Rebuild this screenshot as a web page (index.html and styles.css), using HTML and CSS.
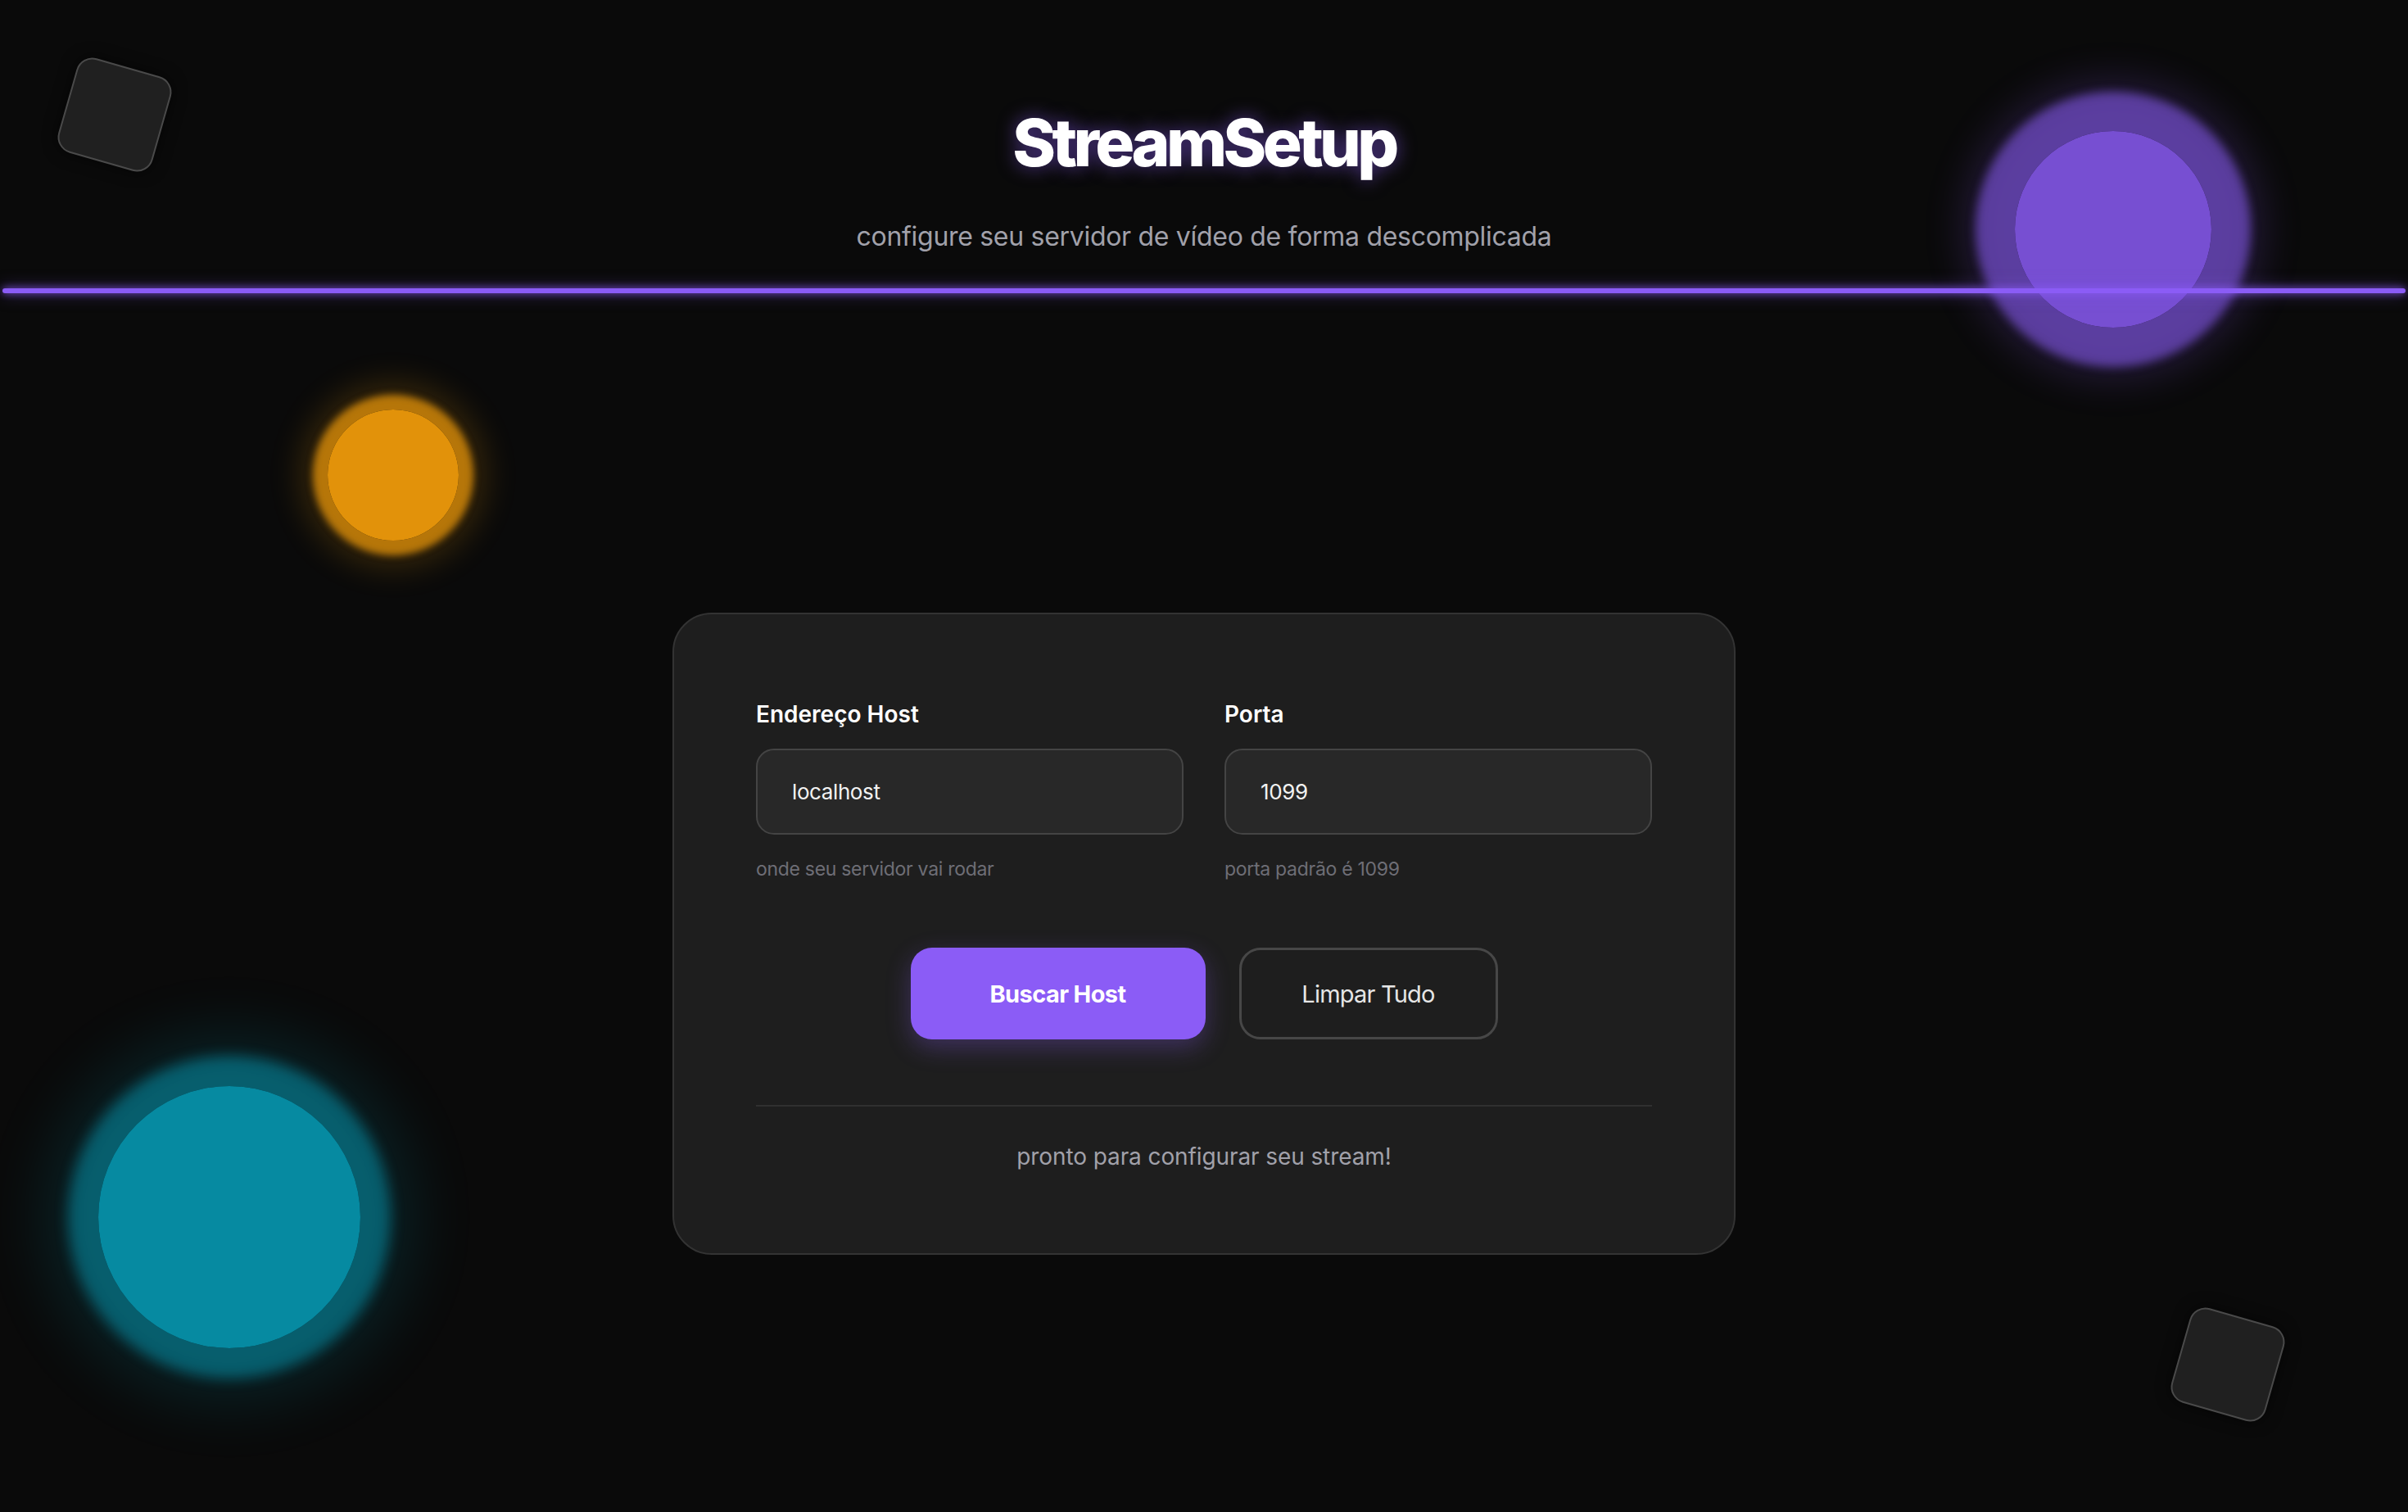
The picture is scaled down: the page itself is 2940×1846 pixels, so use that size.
FILE: index.html
```html
<!DOCTYPE html>
<html lang="pt-BR">
<head>
<meta charset="utf-8">
<title>StreamSetup</title>
<link rel="stylesheet" href="styles.css">
</head>
<body>
<div class="decor">
  <div class="square square-tl"></div>
  <div class="square square-br"></div>
  <div class="orb orb-purple"></div>
  <div class="orb orb-orange"></div>
  <div class="orb orb-teal"></div>
</div>

<header class="header">
  <h1 class="title">StreamSetup</h1>
  <p class="subtitle">configure seu servidor de vídeo de forma descomplicada</p>
</header>
<div class="glow-line"></div>

<main class="main">
  <section class="card">
    <div class="fields">
      <div class="field">
        <label class="label" for="host">Endereço Host</label>
        <input class="input" id="host" type="text" value="localhost">
        <span class="hint">onde seu servidor vai rodar</span>
      </div>
      <div class="field">
        <label class="label" for="port">Porta</label>
        <input class="input" id="port" type="text" value="1099">
        <span class="hint">porta padrão é 1099</span>
      </div>
    </div>
    <div class="actions">
      <button class="btn btn-primary" type="button">Buscar Host</button>
      <button class="btn btn-ghost" type="button">Limpar Tudo</button>
    </div>
    <div class="divider"></div>
    <p class="status">pronto para configurar seu stream!</p>
  </section>
</main>
</body>
</html>
```
FILE: styles.css
```css
* { box-sizing: border-box; }

html, body {
  margin: 0;
  padding: 0;
}

body {
  width: 2940px;
  height: 1846px;
  background: #0a0a0a;
  font-family: Inter, "Noto Sans", "Liberation Sans", sans-serif;
  color: #fff;
  position: relative;
  overflow: hidden;
}

/* decorative canvas */
.decor {
  position: absolute;
  inset: 0;
  pointer-events: none;
}

.square {
  position: absolute;
  width: 120px;
  height: 120px;
  border-radius: 20px;
  background: #202020;
  border: 2px solid #4a4a4a;
  transform: rotate(16deg);
  box-shadow: 0 0 18px rgba(0, 0, 0, 0.6);
}
.square-tl { left: 80px; top: 80px; }
.square-br { left: 2660px; top: 1606px; }

.orb {
  position: absolute;
  border-radius: 50%;
}
.orb-purple {
  left: 2460px;
  top: 160px;
  width: 240px;
  height: 240px;
  background: rgba(139, 92, 246, 0.85);
  box-shadow: 0 0 12px 48px rgba(139, 92, 246, 0.55),
              0 0 50px 62px rgba(139, 92, 246, 0.2);
}
.orb-orange {
  left: 400px;
  top: 500px;
  width: 160px;
  height: 160px;
  background: rgba(245, 158, 11, 0.92);
  box-shadow: 0 0 8px 18px rgba(245, 158, 11, 0.68),
              0 0 40px 32px rgba(245, 158, 11, 0.2);
}
.orb-teal {
  left: 120px;
  top: 1326px;
  width: 320px;
  height: 320px;
  background: rgba(6, 182, 212, 0.75);
  box-shadow: 0 0 16px 37px rgba(6, 182, 212, 0.42),
              0 0 80px 64px rgba(6, 182, 212, 0.14);
}

/* header */
.header {
  position: relative;
  padding-top: 126px;
  text-align: center;
}
.title {
  margin: 0;
  font-size: 80px;
  line-height: 96px;
  font-weight: 800;
  letter-spacing: -4.6px;
  color: #ffffff;
  text-shadow: 0 0 22px rgba(139, 92, 246, 0.55);
}
.subtitle {
  margin: 46px 0 0;
  font-size: 32px;
  line-height: 42px;
  font-weight: 400;
  letter-spacing: -0.3px;
  color: #a1a1aa;
}

.glow-line {
  position: relative;
  margin: 42px 3px 0;
  height: 6px;
  border-radius: 3px;
  background: #8b5cf6;
  box-shadow: 0 0 10px rgba(139, 92, 246, 0.9), 0 0 20px rgba(139, 92, 246, 0.5);
}

/* main card */
.main {
  position: relative;
  display: flex;
  justify-content: center;
  padding-top: 390px;
}

.card {
  width: 1298px;
  background: #1e1e1e;
  border: 2px solid #333333;
  border-radius: 48px;
  padding: 105px 100px 99px;
}

.fields {
  display: grid;
  grid-template-columns: 1fr 1fr;
  column-gap: 50px;
}

.field {
  display: flex;
  flex-direction: column;
}

.label {
  font-size: 28px;
  line-height: 34px;
  font-weight: 600;
  letter-spacing: 0;
  color: #ffffff;
}

.input {
  margin-top: 25px;
  height: 105px;
  padding: 0 42px;
  background: #282828;
  border: 2px solid #444444;
  border-radius: 22px;
  font-family: inherit;
  font-size: 26px;
  letter-spacing: -0.4px;
  color: #f2f2f2;
  outline: none;
}

.hint {
  margin-top: 27px;
  font-size: 23px;
  line-height: 31px;
  letter-spacing: -0.3px;
  color: #6e6e76;
}

.actions {
  display: flex;
  justify-content: center;
  gap: 41px;
  margin-top: 80px;
}

.btn {
  height: 112px;
  border-radius: 26px;
  font-family: inherit;
  font-size: 29px;
  letter-spacing: -0.6px;
  cursor: pointer;
}
.btn-primary {
  width: 360px;
  border: none;
  background: #8b5cf6;
  color: #ffffff;
  font-weight: 700;
  box-shadow: 0 10px 30px rgba(139, 92, 246, 0.3);
}
.btn-ghost {
  width: 316px;
  background: transparent;
  border: 3px solid #474747;
  color: #e6e6e6;
  font-weight: 400;
  letter-spacing: -0.8px;
}

.divider {
  margin-top: 80px;
  height: 2px;
  background: #303030;
}

.status {
  margin: 42px 0 0;
  text-align: center;
  font-size: 28px;
  line-height: 38px;
  letter-spacing: -0.1px;
  color: #a1a1aa;
}
```
